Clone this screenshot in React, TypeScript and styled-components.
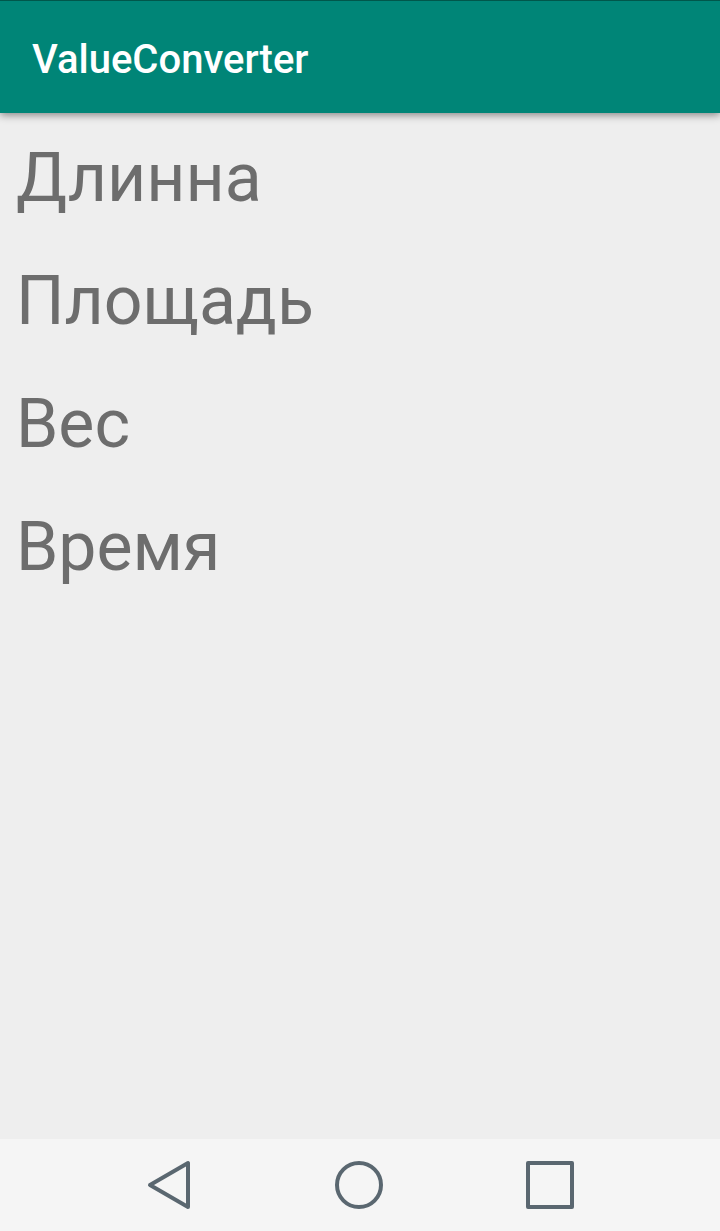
import React from "react";
import styled, { createGlobalStyle } from "styled-components";

const GlobalStyle = createGlobalStyle`
  * { box-sizing: border-box; }
  body { margin: 0; background: #eeeeee; font-family: Roboto, sans-serif; }
`;

const Screen = styled.div`
  display: flex;
  flex-direction: column;
  min-height: 100vh;
  background: #eeeeee;
`;

const AppBar = styled.header`
  display: flex;
  align-items: center;
  height: 113px;
  padding: 6px 32px 0;
  background: #008577;
  border-top: 1px solid #00574b;
  box-shadow: 0 2px 8px rgba(0, 0, 0, 0.45);
`;

const Title = styled.h1`
  margin: 0;
  color: #ffffff;
  font-size: 40px;
  line-height: 48px;
  font-weight: 500;
`;

const CategoryList = styled.main`
  display: flex;
  flex: 1;
  flex-direction: column;
  align-items: flex-start;
  gap: 28px;
  padding: 18px 16px;
`;

const Category = styled.button`
  padding: 0;
  border: 0;
  background: none;
  color: #6d6d6d;
  font-family: inherit;
  font-size: 68px;
  line-height: 95px;
  text-align: left;
`;

const NavBar = styled.nav`
  display: flex;
  justify-content: center;
  gap: 95px;
  height: 92px;
  background: #f5f5f5;
`;

const NavButton = styled.button`
  display: flex;
  align-items: center;
  justify-content: center;
  width: 96px;
  padding: 0;
  border: 0;
  background: none;
  color: #5a6770;
`;

const Icon = styled.svg`
  width: 56px;
  height: 56px;
  fill: none;
  stroke: currentColor;
  stroke-width: 4;
  stroke-linejoin: round;
`;

const categories = ["Длинна", "Площадь", "Вес", "Время"];

export default function App() {
  return (
    <Screen>
      <GlobalStyle />
      <AppBar>
        <Title>ValueConverter</Title>
      </AppBar>
      <CategoryList>
        {categories.map((name) => (
          <Category key={name} type="button">{name}</Category>
        ))}
      </CategoryList>
      <NavBar>
        <NavButton type="button" aria-label="Назад">
          <Icon viewBox="0 0 56 56"><path d="M47 6V50L9 28Z" /></Icon>
        </NavButton>
        <NavButton type="button" aria-label="Домой">
          <Icon viewBox="0 0 56 56"><circle cx="27" cy="28" r="22" /></Icon>
        </NavButton>
        <NavButton type="button" aria-label="Недавние">
          <Icon viewBox="0 0 56 56"><rect x="5" y="6" width="44" height="44" /></Icon>
        </NavButton>
      </NavBar>
    </Screen>
  );
}
